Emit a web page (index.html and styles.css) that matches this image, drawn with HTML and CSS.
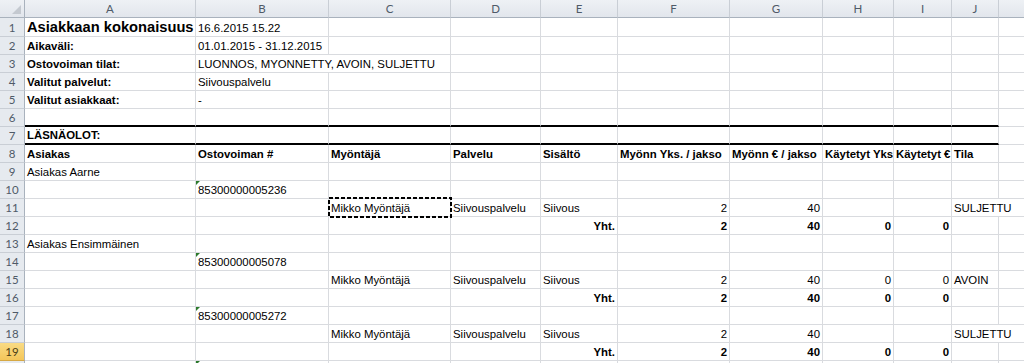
FILE: index.html
```html
<!DOCTYPE html>
<html lang="fi">
<head>
<meta charset="utf-8">
<title>Asiakkaan kokonaisuus</title>
<link rel="stylesheet" href="styles.css">
</head>
<body>
<div class="sheet">
  <div class="row heads">
    <div class="corner"><svg width="9" height="9" viewBox="0 0 9 9"><polygon points="9,0 9,9 0,9" fill="#c4c9d0"/></svg></div>
    <div class="ch">A</div><div class="ch">B</div><div class="ch">C</div><div class="ch">D</div><div class="ch">E</div><div class="ch">F</div><div class="ch">G</div><div class="ch">H</div><div class="ch">I</div><div class="ch">J</div><div class="ch"></div>
  </div>

  <div class="row r1">
    <div class="rh">1</div>
    <div class="c title">Asiakkaan kokonaisuus</div><div class="c">16.6.2015 15.22</div><div class="c"></div><div class="c"></div><div class="c"></div><div class="c"></div><div class="c"></div><div class="c"></div><div class="c"></div><div class="c"></div><div class="c"></div>
  </div>
  <div class="row">
    <div class="rh">2</div>
    <div class="c b">Aikaväli:</div><div class="c">01.01.2015 - 31.12.2015</div><div class="c"></div><div class="c"></div><div class="c"></div><div class="c"></div><div class="c"></div><div class="c"></div><div class="c"></div><div class="c"></div><div class="c"></div>
  </div>
  <div class="row">
    <div class="rh">3</div>
    <div class="c b">Ostovoiman tilat:</div><div class="c span2">LUONNOS, MYONNETTY, AVOIN, SULJETTU</div><div class="c"></div><div class="c"></div><div class="c"></div><div class="c"></div><div class="c"></div><div class="c"></div><div class="c"></div><div class="c"></div>
  </div>
  <div class="row">
    <div class="rh">4</div>
    <div class="c b">Valitut palvelut:</div><div class="c">Siivouspalvelu</div><div class="c"></div><div class="c"></div><div class="c"></div><div class="c"></div><div class="c"></div><div class="c"></div><div class="c"></div><div class="c"></div><div class="c"></div>
  </div>
  <div class="row">
    <div class="rh">5</div>
    <div class="c b">Valitut asiakkaat:</div><div class="c">-</div><div class="c"></div><div class="c"></div><div class="c"></div><div class="c"></div><div class="c"></div><div class="c"></div><div class="c"></div><div class="c"></div><div class="c"></div>
  </div>
  <div class="row">
    <div class="rh">6</div>
    <div class="c rule"></div><div class="c rule"></div><div class="c rule"></div><div class="c rule"></div><div class="c rule"></div><div class="c rule"></div><div class="c rule"></div><div class="c rule"></div><div class="c rule"></div><div class="c rule"></div><div class="c"></div>
  </div>
  <div class="row">
    <div class="rh">7</div>
    <div class="c rule b">LÄSNÄOLOT:</div><div class="c rule"></div><div class="c rule"></div><div class="c rule"></div><div class="c rule"></div><div class="c rule"></div><div class="c rule"></div><div class="c rule"></div><div class="c rule"></div><div class="c rule"></div><div class="c"></div>
  </div>
  <div class="row">
    <div class="rh">8</div>
    <div class="c b">Asiakas</div><div class="c b">Ostovoiman #</div><div class="c b">Myöntäjä</div><div class="c b">Palvelu</div><div class="c b">Sisältö</div><div class="c b">Myönn Yks. / jakso</div><div class="c b">Myönn € / jakso</div><div class="c b">Käytetyt Yks</div><div class="c b">Käytetyt €</div><div class="c b">Tila</div><div class="c"></div>
  </div>
  <div class="row">
    <div class="rh">9</div>
    <div class="c">Asiakas Aarne</div><div class="c"></div><div class="c"></div><div class="c"></div><div class="c"></div><div class="c"></div><div class="c"></div><div class="c"></div><div class="c"></div><div class="c"></div><div class="c"></div>
  </div>
  <div class="row">
    <div class="rh">10</div>
    <div class="c"></div><div class="c flag">85300000005236</div><div class="c"></div><div class="c"></div><div class="c"></div><div class="c"></div><div class="c"></div><div class="c"></div><div class="c"></div><div class="c"></div><div class="c"></div>
  </div>
  <div class="row">
    <div class="rh">11</div>
    <div class="c"></div><div class="c"></div>
    <div class="c sel">Mikko Myöntäjä<span class="ants"><svg width="124" height="21" viewBox="0 0 124 21"><rect x="1" y="1" width="122" height="19" fill="none" stroke="#000" stroke-width="2" stroke-dasharray="4 2"/></svg></span></div>
    <div class="c">Siivouspalvelu</div><div class="c">Siivous</div><div class="c num">2</div><div class="c num">40</div><div class="c"></div><div class="c"></div><div class="c span2">SULJETTU</div>
  </div>
  <div class="row">
    <div class="rh">12</div>
    <div class="c"></div><div class="c"></div><div class="c"></div><div class="c"></div><div class="c num b">Yht.</div><div class="c num b">2</div><div class="c num b">40</div><div class="c num b">0</div><div class="c num b">0</div><div class="c"></div><div class="c"></div>
  </div>
  <div class="row">
    <div class="rh">13</div>
    <div class="c">Asiakas Ensimmäinen</div><div class="c"></div><div class="c"></div><div class="c"></div><div class="c"></div><div class="c"></div><div class="c"></div><div class="c"></div><div class="c"></div><div class="c"></div><div class="c"></div>
  </div>
  <div class="row">
    <div class="rh">14</div>
    <div class="c"></div><div class="c flag">85300000005078</div><div class="c"></div><div class="c"></div><div class="c"></div><div class="c"></div><div class="c"></div><div class="c"></div><div class="c"></div><div class="c"></div><div class="c"></div>
  </div>
  <div class="row">
    <div class="rh">15</div>
    <div class="c"></div><div class="c"></div><div class="c">Mikko Myöntäjä</div><div class="c">Siivouspalvelu</div><div class="c">Siivous</div><div class="c num">2</div><div class="c num">40</div><div class="c num">0</div><div class="c num">0</div><div class="c">AVOIN</div><div class="c"></div>
  </div>
  <div class="row">
    <div class="rh">16</div>
    <div class="c"></div><div class="c"></div><div class="c"></div><div class="c"></div><div class="c num b">Yht.</div><div class="c num b">2</div><div class="c num b">40</div><div class="c num b">0</div><div class="c num b">0</div><div class="c"></div><div class="c"></div>
  </div>
  <div class="row">
    <div class="rh">17</div>
    <div class="c"></div><div class="c flag">85300000005272</div><div class="c"></div><div class="c"></div><div class="c"></div><div class="c"></div><div class="c"></div><div class="c"></div><div class="c"></div><div class="c"></div><div class="c"></div>
  </div>
  <div class="row">
    <div class="rh">18</div>
    <div class="c"></div><div class="c"></div><div class="c">Mikko Myöntäjä</div><div class="c">Siivouspalvelu</div><div class="c">Siivous</div><div class="c num">2</div><div class="c num">40</div><div class="c"></div><div class="c"></div><div class="c span2">SULJETTU</div>
  </div>
  <div class="row">
    <div class="rh active">19</div>
    <div class="c"></div><div class="c"></div><div class="c"></div><div class="c"></div><div class="c num b">Yht.</div><div class="c num b">2</div><div class="c num b">40</div><div class="c num b">0</div><div class="c num b">0</div><div class="c"></div><div class="c"></div>
  </div>
  <div class="row">
    <div class="rh"></div>
    <div class="c"></div><div class="c flag"></div><div class="c"></div><div class="c"></div><div class="c"></div><div class="c"></div><div class="c"></div><div class="c"></div><div class="c"></div><div class="c"></div><div class="c"></div>
  </div>
</div>
</body>
</html>
```

FILE: styles.css
```css
html, body {
  margin: 0;
  background: #fff;
  overflow: hidden;
}

.sheet {
  width: max-content;
  font-family: "Liberation Sans", Arial, sans-serif;
  font-size: 11.4px;
  color: #000;
}

/* every sheet row shares the same column widths */
.row {
  display: grid;
  grid-template-columns: 25px 171px 133px 122px 90px 77px 112px 93px 71px 58px 47px 64px;
  height: 18px;
}
.row.heads { height: 18px; }
.row.r1 { height: 19px; }

/* worksheet cell */
.c {
  box-sizing: border-box;
  min-width: 0;
  display: flex;
  align-items: flex-end;
  padding: 0 2px 1px;
  border-right: 1px solid #d9dbdf;
  border-bottom: 1px solid #d9dbdf;
  line-height: 13px;
  white-space: nowrap;
  overflow: hidden;
}
.c.b { font-weight: bold; }
.c.num { justify-content: flex-end; }
.c.span2 { grid-column: span 2; }
.c.rule { border-bottom: 2px solid #000; }
.c.title {
  font-size: 14.7px;
  font-weight: bold;
  line-height: 16px;
}

/* number-stored-as-text indicator */
.c.flag { position: relative; }
.c.flag::before {
  content: "";
  position: absolute;
  left: 0;
  top: 0;
  border-top: 4px solid #2c7a2c;
  border-right: 4px solid transparent;
}

/* copied cell with marching ants */
.c.sel {
  position: relative;
  overflow: visible;
}
.ants {
  position: absolute;
  left: -1px;
  top: -2px;
  width: 124px;
  height: 21px;
  z-index: 1;
  line-height: 0;
}

/* column and row headers */
.corner, .ch, .rh {
  box-sizing: border-box;
  background: linear-gradient(#eef1f5, #e2e6ec);
  color: #4f5a68;
  font-family: Lato, "Liberation Sans", sans-serif;
  font-size: 11.5px;
  display: flex;
  justify-content: center;
}
.corner {
  border-right: 1px solid #a9b2bd;
  border-bottom: 1px solid #a9b2bd;
  align-items: flex-end;
  justify-content: flex-end;
  padding: 0 3px 3px 0;
}
.ch {
  align-items: center;
  border-right: 1px solid #c9ced5;
  border-bottom: 1px solid #a9b2bd;
}
.rh {
  align-items: flex-end;
  padding-bottom: 2px;
  border-right: 1px solid #a9b2bd;
  border-bottom: 1px solid #c9ced5;
  background: #e6eaef;
}
.rh.active {
  background: linear-gradient(#f9db84, #f4c65a);
  color: #4a3d14;
  border-bottom-color: #d6a843;
}
```
